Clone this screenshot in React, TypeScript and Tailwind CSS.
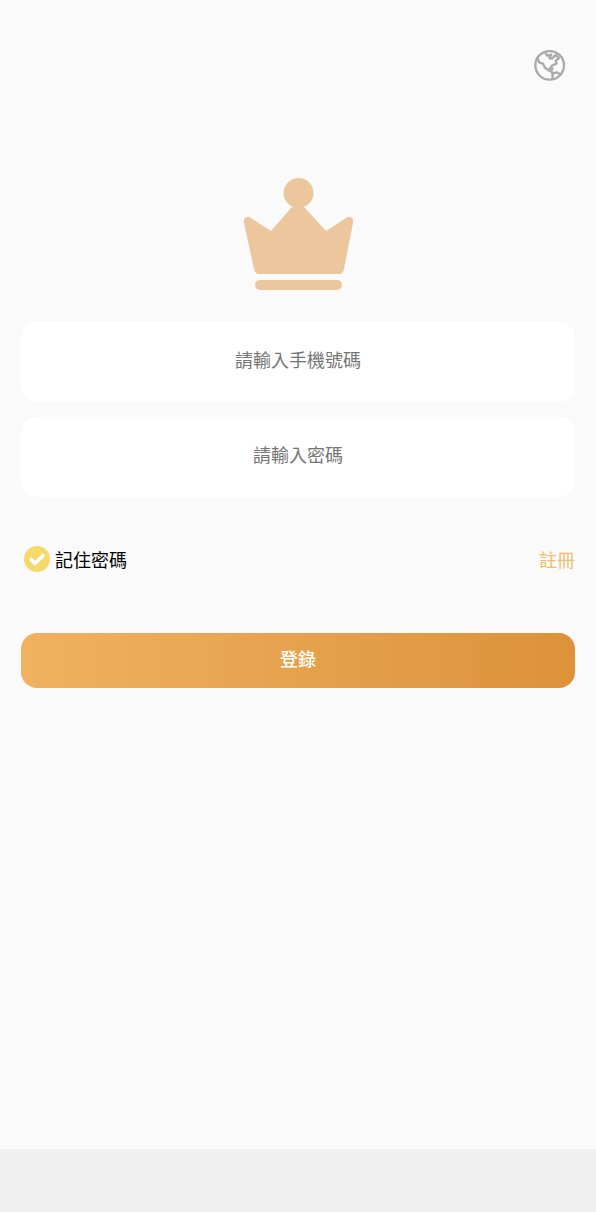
import React, { useState } from 'react';

function GlobeIcon() {
  return (
    <svg className="w-8 h-8" viewBox="0 0 96 96" fill="none" stroke="#aaaaaa" strokeWidth="7" strokeLinejoin="round" aria-hidden="true">
      <circle cx="47" cy="46" r="43" />
      <path d="M11 26 L16 38 L27 41 L32 52 L42 60 L55 67 L56 88" />
      <path d="M55 71 L68 67 L81 74" />
      <path d="M34 9 L39 17 L52 14 L46 24 L54 26 L65 15 L75 24 L65 32 L68 40 L52 48 L55 58 L44 54" />
    </svg>
  );
}

function CrownLogo() {
  return (
    <svg className="w-28 h-28" viewBox="0 0 112 112" fill="#ecc79e" aria-hidden="true">
      <circle cx="56.5" cy="15" r="15" />
      <path d="M49 30 Q56 25 63 30 L84 53 L104 40 C108 37 112 40 111 45 L102 91 Q101 96 97 96 H17 Q13 96 12 91 L2 45 C1 40 5 37 9 40 L29 53 Z" />
      <rect x="13" y="102" width="87" height="10" rx="5" />
    </svg>
  );
}

export default function App() {
  const [phone, setPhone] = useState('');
  const [password, setPassword] = useState('');
  const [remember, setRemember] = useState(true);

  const inputClass =
    'block w-full h-20 pb-1.5 rounded-2xl bg-white text-center text-lg text-black placeholder:text-[#757575] outline-none';

  return (
    <div className="min-h-screen flex flex-col bg-[#fafafa] text-lg font-['Noto_Sans_CJK_TC',sans-serif]">
      <header className="flex justify-end pt-[50px] pr-[30px]">
        <button type="button" aria-label="語言">
          <GlobeIcon />
        </button>
      </header>

      <main className="flex-1 flex flex-col px-[21px] pt-24">
        <div className="flex justify-center">
          <CrownLogo />
        </div>

        <form className="mt-8" onSubmit={(e) => e.preventDefault()}>
          <div className="space-y-[15px]">
            <input
              type="tel"
              aria-label="請輸入手機號碼"
              placeholder="請輸入手機號碼"
              className={inputClass}
              value={phone}
              onChange={(e) => setPhone(e.target.value)}
            />
            <input
              type="password"
              aria-label="請輸入密碼"
              placeholder="請輸入密碼"
              className={inputClass}
              value={password}
              onChange={(e) => setPassword(e.target.value)}
            />
          </div>

          <div className="mt-12 flex items-center justify-between">
            <label className="flex items-center gap-[5px] pl-[3px] text-black">
              <span className="grid w-[26px] h-[26px]">
                <input
                  type="checkbox"
                  className="peer appearance-none col-start-1 row-start-1 rounded-full bg-white checked:bg-[#f6d96b]"
                  checked={remember}
                  onChange={(e) => setRemember(e.target.checked)}
                />
                <svg
                  className="col-start-1 row-start-1 pointer-events-none opacity-0 peer-checked:opacity-100"
                  viewBox="0 0 26 26"
                  fill="none"
                  stroke="#fff"
                  strokeWidth="3.6"
                  aria-hidden="true"
                >
                  <path d="M6 12.5 L11 17.5 L20 8.5" />
                </svg>
              </span>
              記住密碼
            </label>
            <a href="#register" className="text-[#f0bd6c]">
              註冊
            </a>
          </div>

          <button
            type="submit"
            className="mt-[60px] w-full h-[55px] pb-1.5 rounded-2xl bg-linear-to-r from-[#f0b260] to-[#dd9139] font-medium text-white"
          >
            登錄
          </button>
        </form>
      </main>

      <footer className="h-[63px] bg-[#f0f0f0]" />
    </div>
  );
}
